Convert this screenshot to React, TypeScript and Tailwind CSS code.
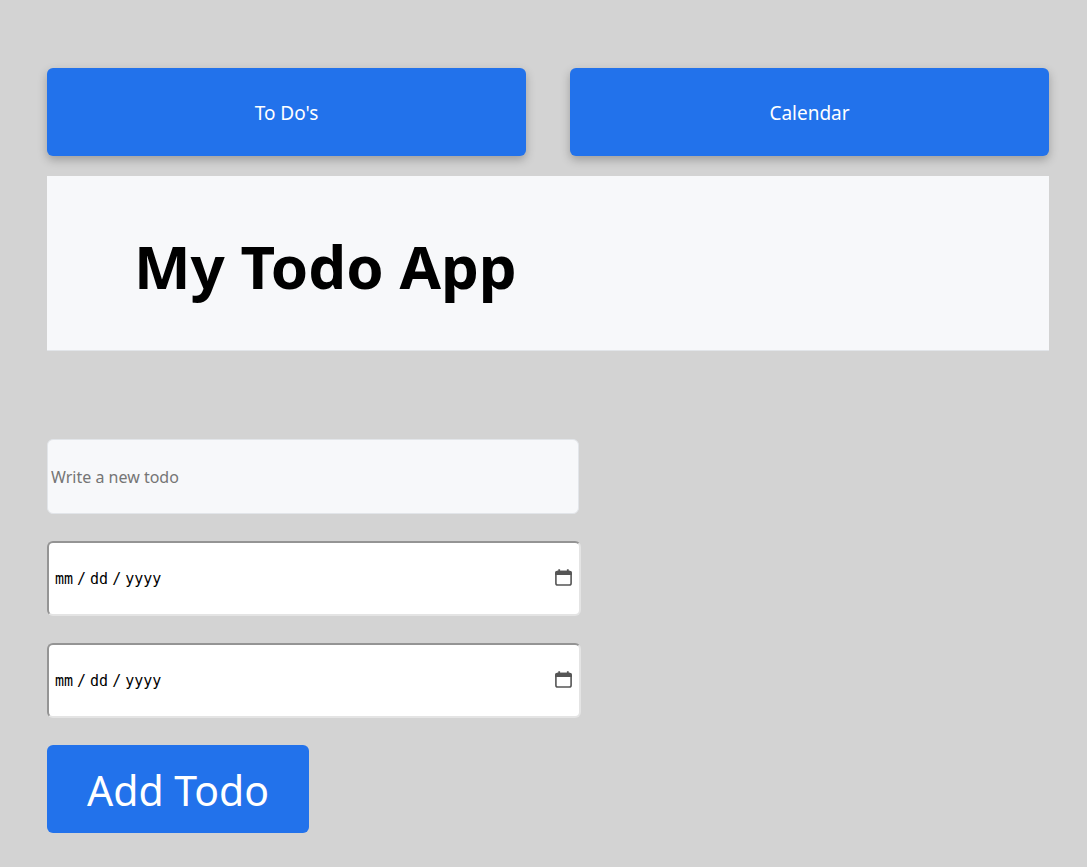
const navButton =
  "h-22 rounded-md bg-[#2272eb] pt-0.5 text-[19px] text-white shadow-[0_4px_10px_rgba(0,0,0,0.25)]";

function CalendarIcon() {
  return (
    <svg
      className="pointer-events-none absolute top-7 right-2 h-[18px] w-[18px]"
      viewBox="0 0 18 18"
      fill="none"
      aria-hidden="true"
    >
      <rect x="0.9" y="2.6" width="15.2" height="13.4" rx="1.8" stroke="#555" strokeWidth="1.6" />
      <path d="M0.1 6V4q0-2.2 2.2-2.2h12.4q2.2 0 2.2 2.2v2z" fill="#555" />
      <path d="M4.2 0.2v2.5M12.8 0.2v2.5" stroke="#555" strokeWidth="1.8" />
    </svg>
  );
}

function DateField({ label }: { label: string }) {
  return (
    <div className="relative">
      <input
        type="date"
        aria-label={label}
        className="block h-[75px] w-full rounded-md border-2 border-t-[#949494] border-r-[#e4e4e4] border-b-[#e4e4e4] border-l-[#949494] bg-white pt-0.5 pr-1 pl-1.5 font-['DejaVu_Sans_Mono',monospace] text-[15px] text-black [&::-webkit-calendar-picker-indicator]:opacity-0 [&::-webkit-datetime-edit-day-field]:p-0 [&::-webkit-datetime-edit-month-field]:p-0 [&::-webkit-datetime-edit-text]:px-1 [&::-webkit-datetime-edit-year-field]:p-0"
      />
      <CalendarIcon />
    </div>
  );
}

export default function App() {
  return (
    <main className="min-h-screen bg-[#d3d3d3] pt-17 pr-[38px] pb-8 pl-[47px] font-['Noto_Sans',sans-serif]">
      <nav className="grid grid-cols-2 gap-11">
        <button className={navButton}>To Do's</button>
        <button className={navButton}>Calendar</button>
      </nav>
      <header className="mt-5 border-b border-[#e2e5e9] bg-[#f7f8fa] px-[87px] pt-[46px] pb-10">
        <h1 className="text-[60px] leading-[88px] font-bold text-black">My Todo App</h1>
      </header>
      <form className="mt-22 flex w-[534px] max-w-full flex-col items-stretch gap-[27px]">
        <input
          aria-label="Write a new todo"
          placeholder="Write a new todo"
          className="mr-0.5 h-[75px] rounded-md border border-[#e2e5e9] bg-[#f7f8fa] px-[3px] text-base placeholder:text-[#757575]"
        />
        <DateField label="Start date" />
        <DateField label="End date" />
        <button
          type="button"
          className="h-22 self-start rounded-md bg-[#2272eb] px-10 pt-1 text-[41px] text-white"
        >
          Add Todo
        </button>
      </form>
    </main>
  );
}
